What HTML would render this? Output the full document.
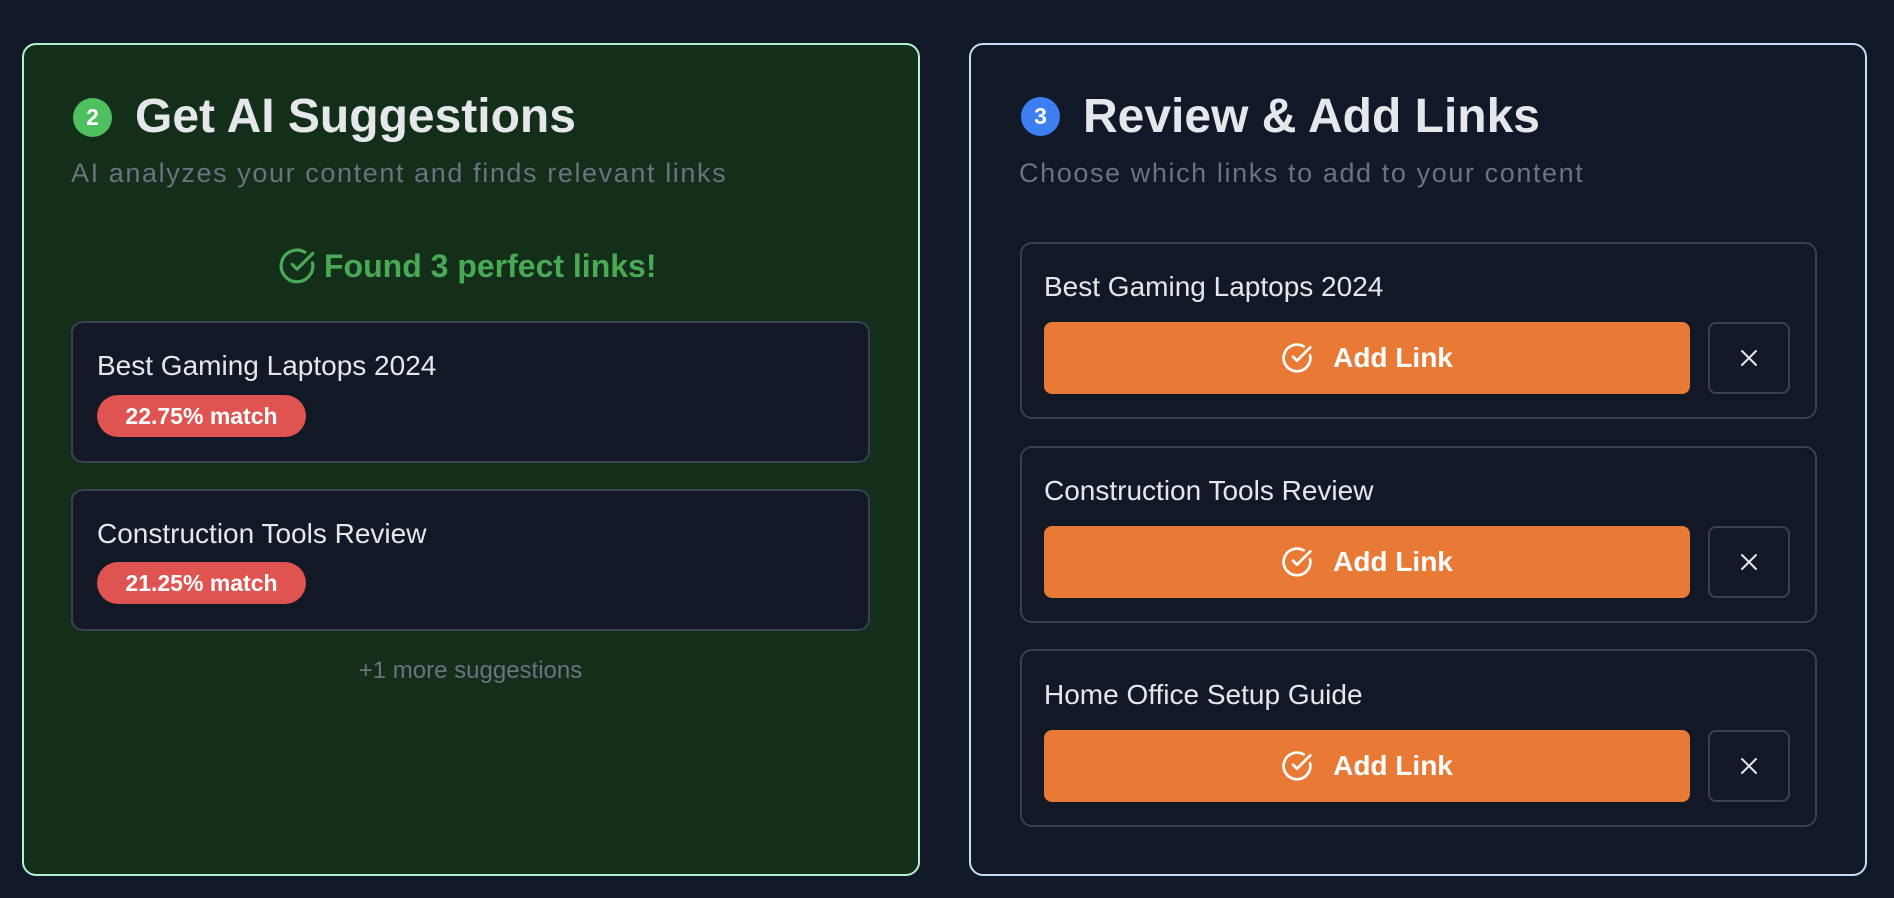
<!DOCTYPE html>
<html><head><meta charset="utf-8"><style>
*{box-sizing:border-box;margin:0;padding:0}
body{width:1894px;height:898px;background:#111827;font-family:"Liberation Sans",sans-serif;position:relative;overflow:hidden;color:#e5e7eb}
.a{position:absolute}
.panel{position:absolute;top:43px;height:833px;border-radius:14px}
.badge{position:absolute;width:39px;height:39px;border-radius:50%;color:#fff;font-weight:bold;font-size:23px;display:flex;align-items:center;justify-content:center}
.title{position:absolute;font-size:48px;font-weight:bold;color:#e5e7eb;white-space:nowrap}
.sub{position:absolute;font-size:27px;color:#6b7280;white-space:nowrap;letter-spacing:1.6px}
.card{position:absolute;background:#121826;border:2px solid #374151;border-radius:12px}
.ct{position:absolute;font-size:28px;color:#e5e7eb;white-space:nowrap}
.pill{position:absolute;background:#df5350;color:#fff;font-weight:bold;font-size:23px;border-radius:22px;display:flex;align-items:center;justify-content:center;white-space:nowrap}
.btn{position:absolute;background:#e87a35;border-radius:8px;display:flex;align-items:center;justify-content:center;color:#fff;font-size:28px;font-weight:bold;gap:20px}
.x{position:absolute;border:2px solid #374151;border-radius:8px;display:flex;align-items:center;justify-content:center}
</style></head><body>
<div class="panel" style="left:22px;width:898px;background:#132e19;border:2px solid #b3f0cc"></div>
<div class="panel" style="left:969px;width:898px;background:#111827;border:2px solid #c6dcf5"></div>

<div class="badge" style="left:73px;top:98px;background:#4fbf60">2</div>
<div class="title" style="left:135px;top:89px">Get AI Suggestions</div>
<div class="sub" style="left:71px;top:158px">AI analyzes your content and finds relevant links</div>

<div class="a" style="left:278px;top:247px;display:flex;align-items:center;gap:8px;color:#4aa955;font-size:32px;font-weight:bold;white-space:nowrap">
<svg width="38" height="38" viewBox="0 0 24 24" fill="none" stroke="#4aa955" stroke-width="2" stroke-linecap="round" stroke-linejoin="round"><path d="M21.8 10A10 10 0 1 1 17 3.3"/><path d="M9 11l3 3L22 4"/></svg>
Found 3 perfect links!</div>

<div class="card" style="left:71px;top:321px;width:799px;height:142px"></div>
<div class="ct" style="left:97px;top:350px">Best Gaming Laptops 2024</div>
<div class="pill" style="left:97px;top:395px;width:209px;height:42px">22.75% match</div>

<div class="card" style="left:71px;top:489px;width:799px;height:142px"></div>
<div class="ct" style="left:97px;top:518px">Construction Tools Review</div>
<div class="pill" style="left:97px;top:562px;width:209px;height:42px">21.25% match</div>

<div class="a" style="left:71px;width:799px;top:657px;text-align:center;font-size:24px;color:#6b7280">+1 more suggestions</div>

<div class="badge" style="left:1021px;top:97px;background:#3d7ef0">3</div>
<div class="title" style="left:1083px;top:89px">Review &amp; Add Links</div>
<div class="sub" style="left:1019px;top:158px">Choose which links to add to your content</div>

<div class="card" style="left:1020px;top:242px;width:797px;height:177px"></div>
<div class="ct" style="left:1044px;top:271px">Best Gaming Laptops 2024</div>
<div class="btn" style="left:1044px;top:322px;width:646px;height:72px"><svg width="32" height="32" viewBox="0 0 24 24" fill="none" stroke="#fff" stroke-width="2" stroke-linecap="round" stroke-linejoin="round"><path d="M21.8 10A10 10 0 1 1 17 3.3"/><path d="M9 11l3 3L22 4"/></svg>Add Link</div>
<div class="x" style="left:1708px;top:322px;width:82px;height:72px"><svg width="24" height="24" viewBox="0 0 24 24" stroke="#e5e7eb" stroke-width="2" stroke-linecap="round"><path d="M5 5l14 14M19 5L5 19"/></svg></div>

<div class="card" style="left:1020px;top:446px;width:797px;height:177px"></div>
<div class="ct" style="left:1044px;top:475px">Construction Tools Review</div>
<div class="btn" style="left:1044px;top:526px;width:646px;height:72px"><svg width="32" height="32" viewBox="0 0 24 24" fill="none" stroke="#fff" stroke-width="2" stroke-linecap="round" stroke-linejoin="round"><path d="M21.8 10A10 10 0 1 1 17 3.3"/><path d="M9 11l3 3L22 4"/></svg>Add Link</div>
<div class="x" style="left:1708px;top:526px;width:82px;height:72px"><svg width="24" height="24" viewBox="0 0 24 24" stroke="#e5e7eb" stroke-width="2" stroke-linecap="round"><path d="M5 5l14 14M19 5L5 19"/></svg></div>

<div class="card" style="left:1020px;top:649px;width:797px;height:178px"></div>
<div class="ct" style="left:1044px;top:679px">Home Office Setup Guide</div>
<div class="btn" style="left:1044px;top:730px;width:646px;height:72px"><svg width="32" height="32" viewBox="0 0 24 24" fill="none" stroke="#fff" stroke-width="2" stroke-linecap="round" stroke-linejoin="round"><path d="M21.8 10A10 10 0 1 1 17 3.3"/><path d="M9 11l3 3L22 4"/></svg>Add Link</div>
<div class="x" style="left:1708px;top:730px;width:82px;height:72px"><svg width="24" height="24" viewBox="0 0 24 24" stroke="#e5e7eb" stroke-width="2" stroke-linecap="round"><path d="M5 5l14 14M19 5L5 19"/></svg></div>
</body></html>
